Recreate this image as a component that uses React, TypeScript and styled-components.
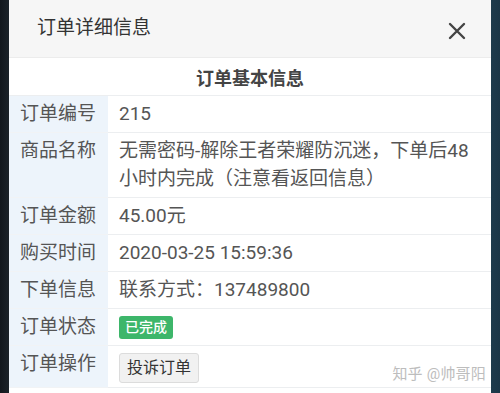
import { Fragment } from 'react'
import styled, { createGlobalStyle } from 'styled-components'

const Global = createGlobalStyle`
  html, body {
    margin: 0;
    padding: 0;
    height: 393px;
    overflow: hidden;
    background: linear-gradient(to right, #12171d 0, #1b2229 9px, #1e3b4c 491px, #1b3647 500px);
    font-family: Roboto, "Noto Sans CJK SC", sans-serif;
  }
`

const Page = styled.div`
  display: flex;
  justify-content: center;
  padding: 0 9px;
`

const Panel = styled.div`
  flex: 1;
  background: #fff;
  height: 393px;
  overflow: hidden;
  position: relative;
`

const Header = styled.div`
  height: 58px;
  background: #f6f6f6;
  display: flex;
  align-items: center;
  justify-content: space-between;
  padding: 0 24px 0 28px;
  border-bottom: 1px solid #ececec;
  box-sizing: border-box;
`

const Title = styled.h1`
  margin: 0;
  font-size: 19px;
  font-weight: 400;
  color: #333;
  line-height: 1;
  padding-bottom: 2px;
`

const Close = styled.span`
  display: flex;
  width: 20px;
  height: 20px;
  margin-top: 4px;
`

const SectionTitle = styled.div`
  height: 38px;
  display: flex;
  align-items: center;
  justify-content: center;
  font-size: 18px;
  font-weight: 700;
  color: #444;
  border-bottom: 1px solid #eceef0;
  box-sizing: border-box;
`

const Table = styled.div`
  display: grid;
  grid-template-columns: 99px 1fr;
`

const Label = styled.div`
  background: #edf4fb;
  color: #555;
  font-size: 19px;
  line-height: 28px;
  padding: 4px 0 4px 11px;
  border-bottom: 1px solid #f1f3f5;
`

const Value = styled.div`
  color: #555;
  font-size: 19px;
  line-height: 28px;
  padding: 4px 8px 4px 11px;
  border-bottom: 1px solid #eceef0;
  display: flex;
  align-items: center;
`

const Text = styled.span`
  display: block;
`

const Badge = styled.span`
  display: inline-block;
  background: #3db66a;
  color: #fff;
  font-size: 14px;
  line-height: 23px;
  padding: 0 6px;
  border-radius: 3px;
  font-weight: 500;
`

const Button = styled.span`
  display: inline-block;
  background: #f1f1f1;
  border: 1px solid #dcdcdc;
  border-radius: 3px;
  color: #333;
  font-size: 16px;
  line-height: 28px;
  padding: 0 7px;
  margin: 3px 0 0;
`

const Watermark = styled.span`
  position: absolute;
  right: 5px;
  bottom: 10px;
  font-size: 15px;
  color: #bdbdbd;
  letter-spacing: 0.2px;
`

const rows: [string, string][] = [
  ['订单编号', '215'],
  ['商品名称', '无需密码-解除王者荣耀防沉迷，下单后48小时内完成（注意看返回信息）'],
  ['订单金额', '45.00元'],
  ['购买时间', '2020-03-25 15:59:36'],
  ['下单信息', '联系方式：137489800'],
]

export default function App() {
  return (
    <Page>
      <Global />
      <Panel>
        <Header>
          <Title>订单详细信息</Title>
          <Close>
            <svg width="20" height="20" viewBox="0 0 20 20">
              <path d="M3 3 L17 17 M17 3 L3 17" stroke="#444" strokeWidth="2.4" strokeLinecap="round" />
            </svg>
          </Close>
        </Header>
        <SectionTitle>订单基本信息</SectionTitle>
        <Table>
          {rows.map(([k, v]) => (
            <Fragment key={k}>
              <Label>{k}</Label>
              <Value>
                <Text>{v}</Text>
              </Value>
            </Fragment>
          ))}
          <Label>订单状态</Label>
          <Value>
            <Badge>已完成</Badge>
          </Value>
          <Label>订单操作</Label>
          <Value>
            <Button>投诉订单</Button>
          </Value>
        </Table>
        <Watermark>知乎 @帅哥阳</Watermark>
      </Panel>
    </Page>
  )
}
